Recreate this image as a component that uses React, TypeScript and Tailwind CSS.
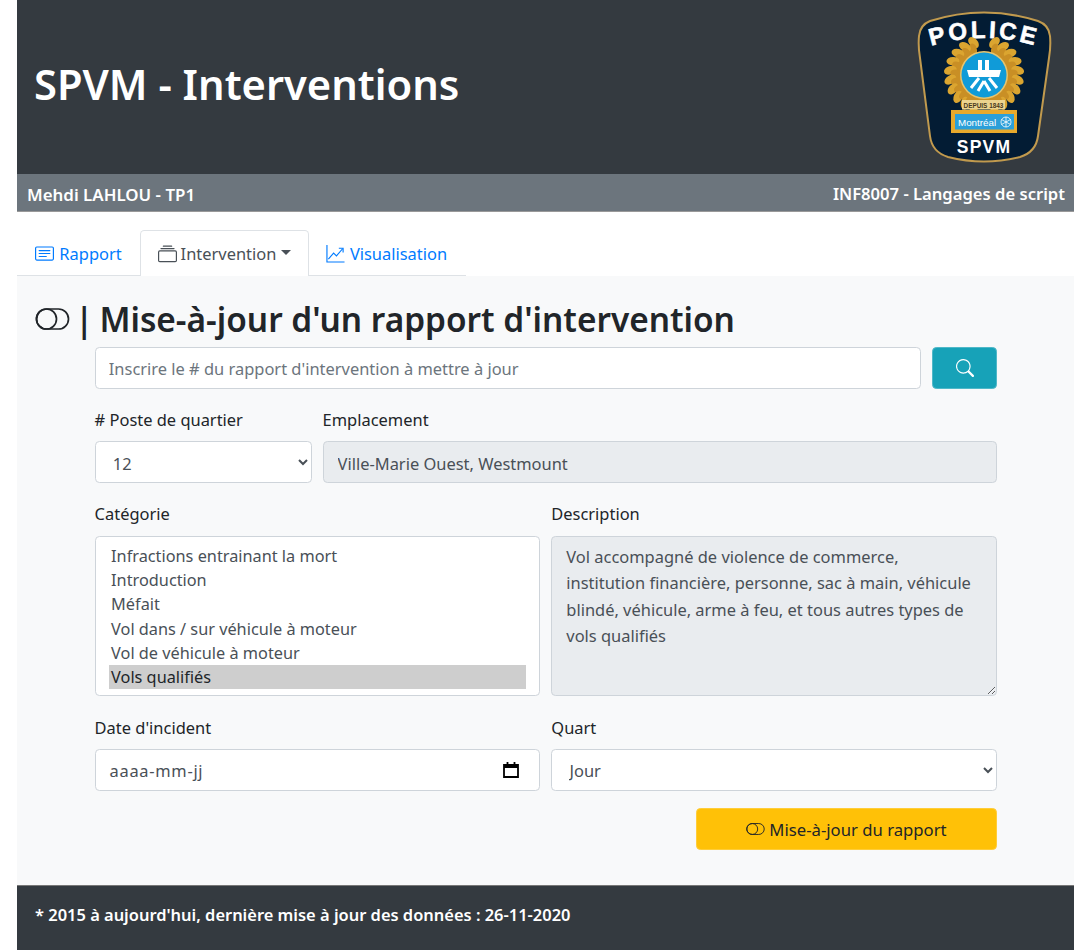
import React from 'react';
import { BsCardText, BsCollection, BsSearch } from 'react-icons/bs';

const categories = [
  'Infractions entrainant la mort',
  'Introduction',
  'Méfait',
  'Vol dans / sur véhicule à moteur',
  'Vol de véhicule à moteur',
  'Vols qualifiés',
];

const description =
  'Vol accompagné de violence de commerce,\ninstitution financière, personne, sac à main, véhicule\nblindé, véhicule, arme à feu, et tous autres types de\nvols qualifiés';

const labelClass = 'block text-[#212529] leading-[27px] mb-[8.2px]';
const tightLabelClass = 'block text-[#212529] leading-[26px] mb-[9.2px]';
const controlClass =
  'w-full h-[41.8px] pt-[2px] border border-[#ced4da] rounded-[4.4px] text-[#495057] bg-white';

// wreath leaves, angle from the top of the badge circle
const leaves = Array.from({ length: 10 }, (_, i) => 18 + i * 16);

const Overlap = ({ className }: { className: string }) => (
  <svg viewBox="0 0 34 22" fill="none" stroke="currentColor" strokeWidth="1.7" className={className}>
    <rect x="1" y="1" width="32" height="20" rx="10" />
    <circle cx="11" cy="11" r="10" />
  </svg>
);

const GraphIcon = ({ className }: { className: string }) => (
  <svg viewBox="0 0 20 20" fill="none" stroke="currentColor" strokeWidth="1.2" className={className}>
    <path d="M1 1 V19 H19.5" />
    <path d="M2.5 16 L8 9.5 L11 12.5 L17.5 5" />
    <path d="M13.5 4.5 H18 V9" />
  </svg>
);

const Logo = () => (
  <svg viewBox="0 0 138 154" className="w-[138px] h-[154px]">
    <defs>
      <path id="policeArc" d="M12 37 Q68 19 124 37" fill="none" />
    </defs>
    <path
      d="M3 26 Q4 15 14 11 Q68 -6 122 11 Q133 15 134 26 Q135 36 133 48 L122 126 Q120 142 104 147 Q68 156 32 147 Q16 142 14 126 L4 48 Q2 36 3 26 Z"
      fill="#031c34"
      stroke="#c19a4e"
      strokeWidth="2"
    />
    <text fontFamily="Liberation Sans, sans-serif" fontWeight="700" fontSize="24" fill="#ffffff" stroke="#ffffff" strokeWidth="0.6" letterSpacing="3">
      <textPath href="#policeArc" startOffset="50%" textAnchor="middle">POLICE</textPath>
    </text>
    <g>
      {leaves.map((a) => (
        <g key={a}>
          <ellipse cx="68" cy="31" rx="4.2" ry="6.5" fill="#dba530" transform={`rotate(${a} 68 65) rotate(25 68 31)`} />
          <ellipse cx="68" cy="31" rx="4.2" ry="6.5" fill="#dba530" transform={`rotate(${-a} 68 65) rotate(-25 68 31)`} />
          <ellipse cx="68" cy="38" rx="4.5" ry="7" fill="#c98f25" transform={`rotate(${a + 7} 68 65) rotate(-20 68 38)`} />
          <ellipse cx="68" cy="38" rx="4.5" ry="7" fill="#c98f25" transform={`rotate(${-a - 7} 68 65) rotate(20 68 38)`} />
        </g>
      ))}
    </g>
    <circle cx="68" cy="65" r="24" fill="#e6c46e" />
    <circle cx="68" cy="65" r="22.5" fill="#109bd8" />
    <g fill="#ffffff">
      <rect x="62" y="50" width="4" height="11" />
      <rect x="69" y="50" width="4" height="11" />
      <path d="M51 60 H85 L83 67 H53 Z" />
    </g>
    <g stroke="#ffffff" strokeWidth="3" fill="none">
      <path d="M63 68 L55 78 M73 68 L81 78" />
      <path d="M68 71 L62 81 M68 71 L74 81" />
    </g>
    <rect x="46" y="90" width="43" height="9.5" fill="#ecd38e" />
    <text x="67.5" y="97.5" textAnchor="middle" fontFamily="Liberation Sans, sans-serif" fontWeight="700" fontSize="6.4" fill="#4b3a1c">DEPUIS 1843</text>
    <rect x="35" y="100" width="66" height="23" fill="#e8a92c" />
    <rect x="39" y="104" width="59" height="15.5" fill="#2b9fd9" />
    <text x="42" y="115.5" fontFamily="Liberation Sans, sans-serif" fontSize="9.8" fill="#ffffff">Montréal</text>
    <g fill="none" stroke="#ffffff" strokeWidth="0.8">
      <circle cx="90" cy="112" r="5" />
      <path d="M90 107 V117 M85.5 109.5 L94.5 114.5 M94.5 109.5 L85.5 114.5" />
    </g>
    <text x="68" y="143" textAnchor="middle" fontFamily="Liberation Sans, sans-serif" fontWeight="700" fontSize="17.5" letterSpacing="1.2" fill="#ffffff">SPVM</text>
  </svg>
);

export default function App() {
  return (
    <div className="mx-[17px] h-[950px] flex flex-col text-[16.45px] bg-white" style={{ fontFamily: '"Noto Sans", sans-serif' }}>
      <header className="h-[174px] bg-[#343a40] text-white flex items-center justify-between pl-[17px] pr-[20px]">
        <h1 className="text-[41.7px] font-semibold leading-[60px] mb-[7px]">SPVM - Interventions</h1>
        <Logo />
      </header>
      <div className="h-[38.4px] bg-[#6c757d] text-white font-semibold flex items-center justify-between pl-[10px] pr-[9px] pt-[3px] border-b border-[#999]">
        <span className="text-[16.9px]">Mehdi LAHLOU - TP1</span>
        <span className="text-[16.6px]">INF8007 - Langages de script</span>
      </div>

      <nav className="mt-[18px] w-[449px] h-[46px] flex border-b border-[#dee2e6]">
        <a className="w-[123px] pt-[2px] flex items-center justify-center gap-[5px] text-[#007bff]">
          <BsCardText className="w-[19px] h-[19px]" />
          Rapport
        </a>
        <a className="w-[169px] h-[46px] pt-[1px] flex items-center justify-center gap-[4px] text-[#495057] bg-white border border-b-0 border-[#dee2e6] rounded-t-[4.4px]">
          <BsCollection className="w-[19px] h-[19px]" />
          Intervention
          <span className="ml-[1px] mb-[3px] border-x-[5.3px] border-x-transparent border-t-[5.3px] border-t-[#495057]" />
        </a>
        <a className="w-[157px] pt-[2px] pr-[2px] flex items-center justify-center gap-[5px] text-[#007bff]">
          <GraphIcon className="w-[19px] h-[19px]" />
          Visualisation
        </a>
      </nav>

      <main className="flex-1 bg-[#f8f9fa] pt-[18px]">
        <h2 className="pl-[18px] h-[52.5px] flex items-center gap-[5px] text-[33.4px] font-semibold text-[#212529] pb-[3px]">
          <Overlap className="w-[35px] h-[22px]" />
          <span>|</span>
          <span className="ml-[1px]">Mise-à-jour d'un rapport d'intervention</span>
        </h2>

        <form className="ml-[77.6px] mr-[77px]">
          <div className="flex gap-[11px] mb-[17.6px]">
            <input
              readOnly
              placeholder="Inscrire le # du rapport d'intervention à mettre à jour"
              className={`${controlClass} flex-1 min-w-0 px-[13.2px] placeholder:text-[#6c757d]`}
            />
            <button type="button" className="w-[65px] h-[41.8px] shrink-0 flex items-center justify-center bg-[#17a2b8] border border-[#4fb8c8] rounded-[4.4px] text-white">
              <BsSearch className="w-[18px] h-[18px]" />
            </button>
          </div>

          <div className="flex gap-[11px] mb-[17.6px]">
            <div className="w-[217px] shrink-0">
              <label className={labelClass}># Poste de quartier</label>
              <select className={`${controlClass} px-[13.2px]`} defaultValue="12">
                <option>12</option>
              </select>
            </div>
            <div className="flex-1 min-w-0">
              <label className={labelClass}>Emplacement</label>
              <input
                readOnly
                value="Ville-Marie Ouest, Westmount"
                className={`${controlClass} px-[14px] !bg-[#e9ecef]`}
              />
            </div>
          </div>

          <div className="grid grid-cols-2 gap-x-[11px] mb-[17.6px]">
            <div>
              <label className={tightLabelClass}>Catégorie</label>
              <div className="h-[160px] border border-[#ced4da] rounded-[4.4px] bg-white text-[16.3px] text-[#495057] pl-[15.5px] pr-[13px] pt-[7px] leading-[24.2px]">
                {categories.map((c, i) => (
                  <div key={c} className={i === categories.length - 1 ? 'bg-[#cecece] text-[#212529] -ml-[2px] pl-[2px]' : ''}>
                    {c}
                  </div>
                ))}
              </div>
            </div>
            <div>
              <label className={tightLabelClass}>Description</label>
              <textarea
                readOnly
                value={description}
                className="block w-full h-[160px] border border-[#ced4da] rounded-[4.4px] bg-[#e9ecef] text-[#495057] px-[14px] py-[7px] leading-[26.4px] outline-none"
              />
            </div>
          </div>

          <div className="grid grid-cols-2 gap-x-[11px] mb-[17.6px]">
            <div>
              <label className={labelClass}>Date d'incident</label>
              <div className={`${controlClass} flex items-center justify-between pl-[14px] pr-[19px]`}>
                <span className="tracking-[0.7px] mt-[2px]">aaaa-mm-jj</span>
                <svg viewBox="0 0 18 18" className="w-[18px] h-[18px] -mt-[2px] text-black" fill="none" stroke="currentColor">
                  <path d="M2 4 h14 v12 h-14 z" strokeWidth="1.8" />
                  <path d="M2 5.5 h14" strokeWidth="3" />
                  <path d="M5.5 1 v3 M12.5 1 v3" strokeWidth="1.8" />
                </svg>
              </div>
            </div>
            <div>
              <label className={labelClass}>Quart</label>
              <select className={`${controlClass} px-[13.2px]`} defaultValue="Jour">
                <option>Jour</option>
              </select>
            </div>
          </div>

          <div className="flex justify-end">
            <button type="button" className="w-[301px] h-[41.8px] flex items-center justify-center gap-[4px] bg-[#ffc107] border border-[#ffcd39] rounded-[4.4px] text-[16.7px] text-[#212529]">
              <Overlap className="w-[19px] h-[12px]" />
              Mise-à-jour du rapport
            </button>
          </div>
        </form>
      </main>

      <footer className="h-[65px] bg-[#343a40] text-white font-semibold flex items-center pl-[18px] pb-[6px] border-t border-[#777]">
        * 2015 à aujourd'hui, dernière mise à jour des données : 26-11-2020
      </footer>
    </div>
  );
}
